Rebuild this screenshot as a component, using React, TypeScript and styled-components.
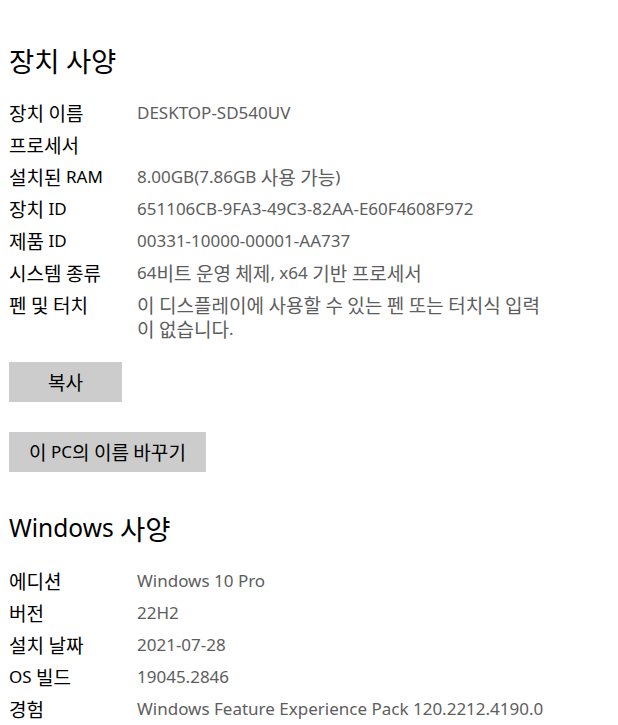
import React from 'react';
import styled, { createGlobalStyle } from 'styled-components';

const GlobalStyle = createGlobalStyle`
  body {
    margin: 0;
    background: #ffffff;
    font-family: 'Noto Sans', 'Noto Sans CJK KR', sans-serif;
  }
`;

const Page = styled.div`
  padding: 0 9px;
  width: 600px;
`;

// Hangul runs are set a little larger so they match the Malgun Gothic sizing
const Ko = styled.span`
  font-family: 'Noto Sans CJK KR', sans-serif;
  font-size: 1.12em;
  vertical-align: top;
`;

const SectionTitle = styled.h2<{ $top: number }>`
  margin: ${(p) => p.$top}px 0 0;
  font-size: 24.5px;
  font-weight: 400;
  line-height: 36px;
  color: #000000;
`;

const Specs = styled.dl`
  margin: 0;
  display: grid;
  grid-template-columns: 128px 1fr;
  row-gap: 8px;
  padding-top: 23px;
`;

const Label = styled.dt`
  margin: 0;
  font-size: 17px;
  line-height: 24px;
  color: #000000;
`;

const Value = styled.dd`
  margin: 0;
  max-width: 418px;
  font-size: 17px;
  line-height: 24px;
  color: #5d5d5d;
`;

const Actions = styled.div`
  display: flex;
  flex-direction: column;
  align-items: flex-start;
  gap: 30px;
  padding-top: 21px;
`;

const Button = styled.button`
  min-width: 113px;
  height: 40px;
  padding: 0 20px;
  border: none;
  background: #cccccc;
  font-family: 'Noto Sans', 'Noto Sans CJK KR', sans-serif;
  font-size: 17px;
  line-height: 24px;
  color: #000000;
`;

const t = (s: string) =>
  s.split(/([가-힣]+)/).map((part, i) =>
    /[가-힣]/.test(part) ? <Ko key={i}>{part}</Ko> : part
  );

const device: [string, string][] = [
  ['장치 이름', 'DESKTOP-SD540UV'],
  ['프로세서', ''],
  ['설치된 RAM', '8.00GB(7.86GB 사용 가능)'],
  ['장치 ID', '651106CB-9FA3-49C3-82AA-E60F4608F972'],
  ['제품 ID', '00331-10000-00001-AA737'],
  ['시스템 종류', '64비트 운영 체제, x64 기반 프로세서'],
  ['펜 및 터치', '이 디스플레이에 사용할 수 있는 펜 또는 터치식 입력이 없습니다.'],
];

const windows: [string, string][] = [
  ['에디션', 'Windows 10 Pro'],
  ['버전', '22H2'],
  ['설치 날짜', '2021-07-28'],
  ['OS 빌드', '19045.2846'],
  ['경험', 'Windows Feature Experience Pack 120.2212.4190.0'],
];

const SpecList = ({ items }: { items: [string, string][] }) => (
  <Specs>
    {items.map(([label, value]) => (
      <React.Fragment key={label}>
        <Label>{t(label)}</Label>
        <Value>{value ? t(value) : '\u00a0'}</Value>
      </React.Fragment>
    ))}
  </Specs>
);

const App = () => (
  <>
    <GlobalStyle />
    <Page>
      <SectionTitle $top={42}>{t('장치 사양')}</SectionTitle>
      <SpecList items={device} />
      <Actions>
        <Button>{t('복사')}</Button>
        <Button>{t('이 PC의 이름 바꾸기')}</Button>
      </Actions>
      <SectionTitle $top={38}>{t('Windows 사양')}</SectionTitle>
      <SpecList items={windows} />
    </Page>
  </>
);

export default App;
